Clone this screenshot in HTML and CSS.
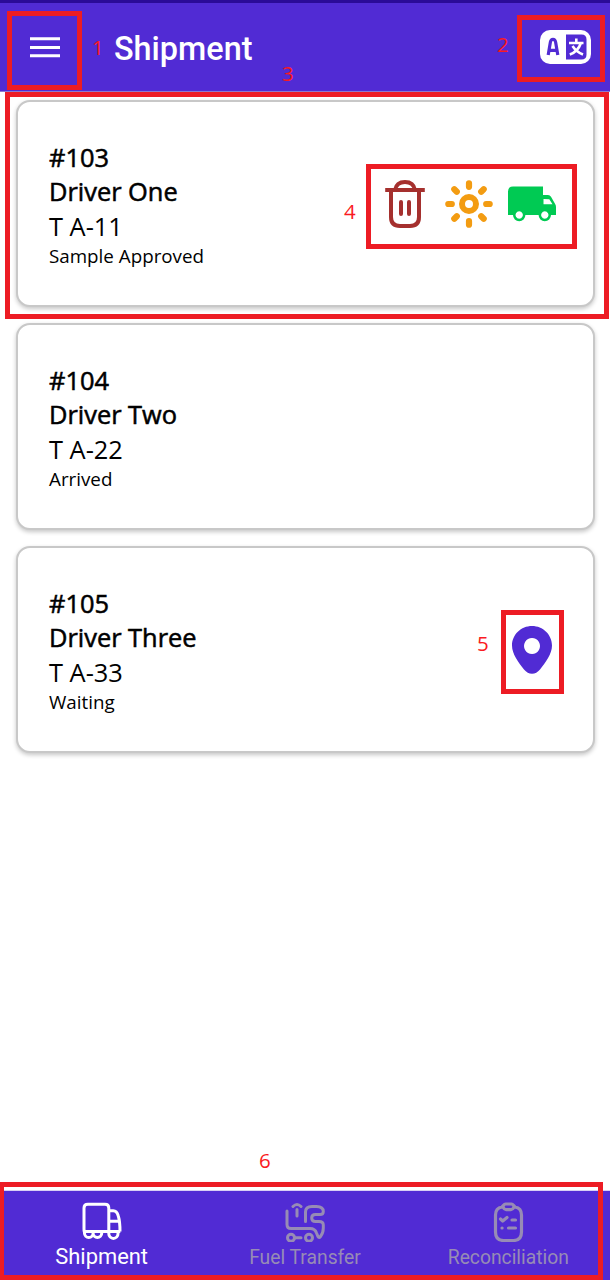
FILE: index.html
```html
<!DOCTYPE html>
<html lang="en">
<head>
<meta charset="utf-8">
<title>Shipment</title>
<link rel="stylesheet" href="styles.css">
</head>
<body>
<div class="screen">
  <header class="appbar">
    <svg class="menu-icon" viewBox="0 0 30 21"><path d="M0 1.800h30M0 10.400h30M0 18.800h30" stroke="#fff" stroke-width="3"/></svg>
    <h1 class="title">Shipment</h1>
    <svg class="lang-icon" viewBox="0 0 51 34">
      <rect width="51" height="34" rx="10" fill="#fff"/>
      <path d="M26 4.500h15.500q5 0 5 5v15q0 5-5 5H26z" fill="#512bd4"/>
      <path d="M8.200 25L10.400 12Q11 9.300 13 9.300T15.600 12L17.800 25M9.500 20.300H16.500" fill="none" stroke="#512bd4" stroke-width="3.200"/>
      <path d="M36.300 8.500v4M29 13h14.500M40.700 13.500Q38 21.500 29.800 24.500M32.500 16Q36.500 22 43 24.500" fill="none" stroke="#fff" stroke-width="2.600"/>
    </svg>
  </header>

  <main class="list">
    <article class="card">
      <div class="info">
        <div class="strong">#103</div>
        <div class="strong">Driver One</div>
        <div class="plate">T A-11</div>
        <div class="status">Sample Approved</div>
      </div>
      <div class="actions">
        <svg class="icon" viewBox="0 0 48 48" fill="none" stroke="#a5302e" stroke-width="4">
          <path d="M4.200 10h39.600"/>
          <path d="M14 10Q15.500 2 24 2t10 8M10 10v27q0 9 9 9h10q9 0 9-9V10"/>
          <path d="M20 22v12M28 22v12" stroke-linecap="round"/>
        </svg>
        <svg class="icon" viewBox="0 0 48 48" fill="none" stroke="#f39c12">
          <circle cx="24" cy="24" r="7" stroke-width="6"/>
          <path d="M24 3.300v3.500M24 41.200v3.500M3.300 24h3.500M41.200 24h3.500M9.300 9.300l2.500 2.500M36.200 36.200l2.500 2.500M9.300 38.700l2.500-2.500M36.200 11.800l2.500-2.500" stroke-width="6.200" stroke-linecap="round"/>
        </svg>
        <svg class="icon" viewBox="0 0 48 48">
          <path fill-rule="evenodd" fill="#00ca53" d="M5 6.500H35V15h5q2 0 3 1.800l4 7q1 1.500 1 3.200v8H43a6.200 6.200 0 0 1-12.400 0H17.400a6.200 6.200 0 0 1-12.400 0H0V11.500q0-5 5-5ZM35.500 19v5.200h9L41.300 19.300ZM11.200 31.300a3.700 3.700 0 1 0 .01 0ZM36.800 31.300a3.700 3.700 0 1 0 .01 0Z"/>
        </svg>
      </div>
    </article>

    <article class="card">
      <div class="info">
        <div class="strong">#104</div>
        <div class="strong">Driver Two</div>
        <div class="plate">T A-22</div>
        <div class="status">Arrived</div>
      </div>
    </article>

    <article class="card">
      <div class="info">
        <div class="strong">#105</div>
        <div class="strong">Driver Three</div>
        <div class="plate">T A-33</div>
        <div class="status">Waiting</div>
      </div>
      <div class="actions">
        <svg class="icon" viewBox="0 0 48 48">
          <path fill-rule="evenodd" fill="#512bd4" d="M24 0C13 0 4 8.700 4 19.500C4 28 10.500 36.500 16 43.500Q19.500 47.700 24 47.700T32 43.500C37.500 36.500 44 28 44 19.500C44 8.700 35 0 24 0ZM24 12a8 8 0 1 0 .01 0Z"/>
        </svg>
      </div>
    </article>
  </main>

  <nav class="tabs">
    <div class="tab active">
      <svg class="tab-icon" viewBox="0 0 40 40" fill="none" stroke="currentColor" stroke-width="3" stroke-linejoin="round">
        <path d="M3.300 31.500C1.800 30.500 2 28 2 26V6q0-3.800 3.800-3.800H23q3.800 0 3.800 3.800V29.500H1.800M26.800 8.700h4.500q3.500 0 5 5.300 1.700 5.500 1.700 15.500M27 19.300h10.500M23 29.500h15.300"/>
        <path d="M2.500 28.500V31.200a4.300 4.300 0 0 0 8.600 0v-1.700M11.100 31.200a4.300 4.300 0 0 0 8.600 0v-1.700M26.800 29.500V31.800a4.600 4.600 0 0 0 9.200 0v-2.300"/>
      </svg>
      <span class="tab-label">Shipment</span>
    </div>
    <div class="tab">
      <svg class="tab-icon" viewBox="0 0 40 40" fill="none" stroke="currentColor" stroke-width="3" stroke-linecap="round">
        <path d="M2 9v13.500Q2 26.500 6 26.500H25Q30 26.500 31.500 31L33 34.500Q34 36.500 35.500 34.500Q38.300 31 38.300 26V23Q38.300 19.500 34 19.500H30.500Q26.700 19.500 26.700 16T30.500 12.500H35Q38.300 12.500 38.300 9.500Q38.300 4.500 31.500 4.500H27Q20.500 4.500 20.500 10V19.500"/>
        <path d="M8 4.500Q12 .5 16 4.500M12 7.500v6.500M10 35.700h6"/>
        <circle cx="6" cy="35.700" r="3.500"/><circle cx="24" cy="35.700" r="3.500"/>
      </svg>
      <span class="tab-label">Fuel Transfer</span>
    </div>
    <div class="tab">
      <svg class="tab-icon" viewBox="0 0 40 40" fill="none" stroke="currentColor" stroke-width="3.200" stroke-linecap="round" stroke-linejoin="round">
        <path d="M14 5Q7.500 6 7.500 13v17q0 8.500 8 8.500h10q8 0 8-8.500V13q0-7-6.500-8L25.500 3.500Q24.500 2 23.500 2h-6q-1 0-2 1.500ZM15 5.200q1.500 2.500 3 2.500h5q1.500 0 3-2.500"/>
        <path d="M12.500 17l2.200 2L19 15.500M24 18h3.500M20.500 26h7M14 26h.1"/>
      </svg>
      <span class="tab-label">Reconciliation</span>
    </div>
  </nav>

  <div class="mark mark-1"></div><span class="num num-1">1</span>
  <div class="mark mark-2"></div><span class="num num-2">2</span>
  <div class="mark mark-3"></div><span class="num num-3">3</span>
  <div class="mark mark-4"></div><span class="num num-4">4</span>
  <div class="mark mark-5"></div><span class="num num-5">5</span>
  <div class="mark mark-6"></div><span class="num num-6">6</span>
</div>
</body>
</html>
```

FILE: styles.css
```css
* { box-sizing: border-box; }
body { margin: 0; background: #fff; }
svg { display: block; flex: none; }

.screen {
  position: relative;
  display: flex;
  flex-direction: column;
  width: 610px;
  height: 1280px;
  overflow: hidden;
  font-family: "Open Sans", "Noto Sans", sans-serif;
  color: #000;
}

.appbar {
  display: flex;
  align-items: center;
  height: 92px;
  padding: 0 19px 0 30px;
  background: #512bd4;
  border-top: 3px solid #2b0b98;
  border-bottom: 1px solid #8d78cf;
}
.menu-icon { width: 30px; height: 21px; }
.title {
  flex: 1;
  margin: 4px 0 0 54px;
  font: 500 32.4px/40px Roboto, sans-serif;
  color: #fff;
}
.lang-icon { width: 51px; height: 34px; }

.list {
  flex: 1;
  display: flex;
  flex-direction: column;
  gap: 16px;
  padding: 8px 15px 0 16px;
}
.card {
  display: flex;
  align-items: center;
  justify-content: space-between;
  height: 207px;
  padding: 2px 37px 0 31px;
  background: #fff;
  border: 2px solid #c8c8c8;
  border-radius: 14px;
  box-shadow: 0 2px 4px rgba(0, 0, 0, .22);
}
.info { font-size: 25.4px; line-height: 34.7px; }
.strong { -webkit-text-stroke: .55px #000; }
.strong + .strong { margin: -.6px 0 .6px; }
.status { font-size: 18.8px; line-height: 25px; }
.actions { display: flex; gap: 15.500px; padding-bottom: 2px; }
.icon { width: 48px; height: 48px; }

.tabs {
  display: grid;
  grid-template-columns: repeat(3, 1fr);
  height: 90px;
  background: #512bd4;
  border-top: 1px solid #d8cff5;
}
.tab {
  display: flex;
  flex-direction: column;
  align-items: center;
  padding-top: 11px;
  color: #978bb5;
}
.tab.active { color: #fff; }
.tab-icon { width: 40px; height: 40px; }
.tab-label { margin-top: 4px; font: 19.3px/24px Roboto, sans-serif; }
.active .tab-label { margin-top: 3px; font-size: 21.900px; }

/* numbered callouts drawn over the screen */
.mark { position: absolute; border: 5px solid #ed1c24; }
.mark-1 { left: 7px; top: 11px; width: 75px; height: 79px; }
.mark-2 { left: 517px; top: 15px; width: 88px; height: 67px; }
.mark-3 { left: 5px; top: 92px; width: 604px; height: 227px; }
.mark-4 { left: 366px; top: 164px; width: 211px; height: 85px; }
.mark-5 { left: 501px; top: 610px; width: 63px; height: 84px; }
.mark-6 { left: -1px; top: 1182px; width: 604px; height: 98px; }

.num { position: absolute; font-size: 20.5px; line-height: 28px; color: #fa1a22; }
.num-1 { left: 92px; top: 33px; }
.num-2 { left: 497px; top: 30px; }
.num-3 { left: 282px; top: 59px; }
.num-4 { left: 344px; top: 197px; }
.num-5 { left: 477px; top: 629px; }
.num-6 { left: 259px; top: 1146px; }
```
